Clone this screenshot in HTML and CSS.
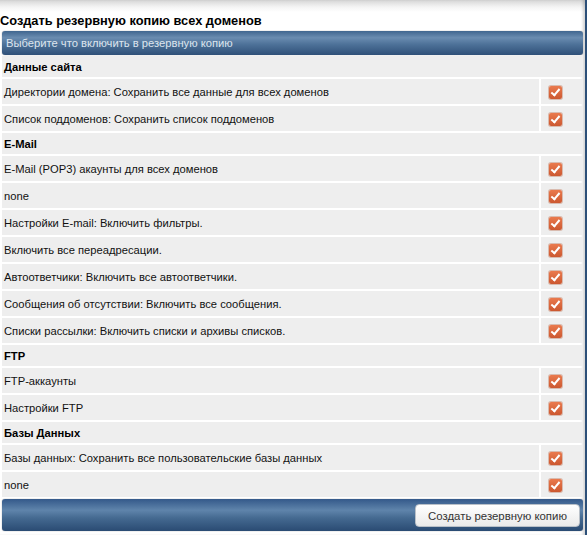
FILE: index.html
```html
<!DOCTYPE html>
<html lang="ru">
<head>
<meta charset="utf-8">
<title>Создать резервную копию</title>
<link rel="stylesheet" href="styles.css">
</head>
<body>
<div class="page">
  <div class="title">Создать резервную копию всех доменов</div>
  <div class="bar">Выберите что включить в резервную копию</div>
  <table class="list">
    <tr class="sec"><td colspan="2">Данные сайта</td></tr>
    <tr><td>Директории домена: Сохранить все данные для всех доменов</td><td class="chk"><span class="cb"></span></td></tr>
    <tr><td>Список поддоменов: Сохранить список поддоменов</td><td class="chk"><span class="cb"></span></td></tr>
    <tr class="sec"><td colspan="2">E-Mail</td></tr>
    <tr><td>E-Mail (POP3) акаунты для всех доменов</td><td class="chk"><span class="cb"></span></td></tr>
    <tr><td>none</td><td class="chk"><span class="cb"></span></td></tr>
    <tr><td>Настройки E-mail: Включить фильтры.</td><td class="chk"><span class="cb"></span></td></tr>
    <tr><td>Включить все переадресации.</td><td class="chk"><span class="cb"></span></td></tr>
    <tr><td>Автоответчики: Включить все автоответчики.</td><td class="chk"><span class="cb"></span></td></tr>
    <tr><td>Сообщения об отсутствии: Включить все сообщения.</td><td class="chk"><span class="cb"></span></td></tr>
    <tr><td>Списки рассылки: Включить списки и архивы списков.</td><td class="chk"><span class="cb"></span></td></tr>
    <tr class="sec"><td colspan="2">FTP</td></tr>
    <tr><td>FTP-аккаунты</td><td class="chk"><span class="cb"></span></td></tr>
    <tr><td>Настройки FTP</td><td class="chk"><span class="cb"></span></td></tr>
    <tr class="sec"><td colspan="2">Базы Данных</td></tr>
    <tr><td>Базы данных: Сохранить все пользовательские базы данных</td><td class="chk"><span class="cb"></span></td></tr>
    <tr><td>none</td><td class="chk"><span class="cb"></span></td></tr>
  </table>
  <div class="footer"><button class="btn" type="button">Создать резервную копию</button></div>
</div>
</body>
</html>
```
FILE: styles.css
```css
html, body {
  margin: 0;
  padding: 0;
}
body {
  background: #2c4f78;
  font-family: "Liberation Sans", Arial, sans-serif;
  font-size: 11.2px;
  color: #111;
}
.page {
  width: 585px;
  min-height: 535px;
  background: linear-gradient(#d6d6d6 0, #f4f4f4 7px, #ffffff 12px);
  box-shadow: inset -3px 0 3px -1px rgba(0, 0, 0, 0.18);
  overflow: hidden;
}
.title {
  padding-top: 12px;
  height: 19px;
  line-height: 17px;
  font-weight: bold;
  font-size: 12.8px;
  color: #000;
}
.bar {
  margin: 0 2px;
  height: 24px;
  line-height: 24px;
  padding-left: 4px;
  border-radius: 3px;
  color: #dde5ee;
  background: linear-gradient(#40668f 0, #6a8cb0 28%, #4e7299 55%, #2f5078 100%);
  box-shadow: 0 0 1px rgba(0, 0, 0, 0.6);
}
.list {
  width: 585px;
  border-collapse: separate;
  border-spacing: 2px;
  margin-top: -1px;
}
.list td {
  background: #eeeeee;
  height: 25px;
  padding: 0 2px;
  vertical-align: middle;
  color: #111;
}
.list .sec td {
  height: 21px;
  font-weight: bold;
  color: #000;
}
.list td.chk {
  width: 34px;
  padding: 0 0 0 8px;
}
.cb {
  display: block;
  width: 13px;
  height: 13px;
  margin-top: 1px;
  border-radius: 2px;
  background: linear-gradient(#ea7a4e, #cc5830);
  box-shadow: 0 0 0 1px rgba(170, 70, 30, 0.3);
  position: relative;
}
.cb::after {
  content: "";
  position: absolute;
  left: 4px;
  top: 1px;
  width: 3px;
  height: 7px;
  border: solid #fff;
  border-width: 0 2px 2px 0;
  transform: rotate(40deg);
}
.footer {
  margin: 0 2px;
  height: 32px;
  border-radius: 3px;
  background: linear-gradient(#34598a 0, #5f84ab 35%, #446990 60%, #2a4b73 100%);
  box-shadow: 0 0 1px rgba(0, 0, 0, 0.6);
  display: flex;
  justify-content: flex-end;
  align-items: center;
  padding-right: 3px;
}
.btn {
  height: 23px;
  width: 165px;
  margin-top: 1px;
  font-family: "Liberation Sans", Arial, sans-serif;
  font-size: 11.4px;
  color: #333;
  border: 1px solid #b9c0c8;
  border-radius: 4px;
  background: linear-gradient(#ffffff, #eaeaea);
  padding: 0;
}
```
